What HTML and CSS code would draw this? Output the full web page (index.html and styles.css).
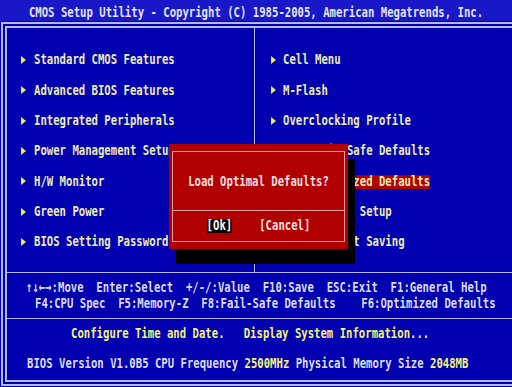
FILE: index.html
```html
<!DOCTYPE html>
<html>
<head>
<meta charset="utf-8">
<link rel="stylesheet" href="styles.css">
</head>
<body>
<div class="screen">
  <div class="title"><span class="t">CMOS Setup Utility - Copyright (C) 1985-2005, American Megatrends, Inc.</span></div>
  <div class="outer">
    <div class="inner">
      <div class="menu">
        <ul class="col left">
          <li><i class="arr"></i><span class="t">Standard CMOS Features</span></li>
          <li><i class="arr"></i><span class="t">Advanced BIOS Features</span></li>
          <li><i class="arr"></i><span class="t">Integrated Peripherals</span></li>
          <li><i class="arr"></i><span class="t">Power Management Setup</span></li>
          <li><i class="arr"></i><span class="t">H/W Monitor</span></li>
          <li><i class="arr"></i><span class="t">Green Power</span></li>
          <li><i class="arr"></i><span class="t">BIOS Setting Password</span></li>
        </ul>
        <ul class="col right">
          <li><i class="arr"></i><span class="t">Cell Menu</span></li>
          <li><i class="arr"></i><span class="t">M-Flash</span></li>
          <li><i class="arr"></i><span class="t">Overclocking Profile</span></li>
          <li><i class="arr"></i><span class="t">Load Fail-Safe Defaults</span></li>
          <li class="sel"><i class="arr"></i><span class="t">Load Optimized Defaults</span></li>
          <li><i class="arr"></i><span class="t">Save &amp; Exit Setup</span></li>
          <li><i class="arr"></i><span class="t">Exit Without Saving</span></li>
        </ul>
      </div>
      <div class="help">
        <div class="t l1">↑↓←→:Move  Enter:Select  +/-/:Value  F10:Save  ESC:Exit  F1:General Help</div>
        <div class="t l2">F4:CPU Spec  F5:Memory-Z  F8:Fail-Safe Defaults    F6:Optimized Defaults</div>
      </div>
      <div class="status"><span class="t">Configure Time and Date.   Display System Information...</span></div>
      <div class="info"><span class="t">BIOS Version V1.0B5 CPU Frequency <b>2500MHz</b> Physical Memory Size <b>2048MB</b></span></div>
    </div>
  </div>
  <div class="dialog">
    <div class="dlg-inner">
      <div class="dlg-msg"><span class="t">Load Optimal Defaults?</span></div>
      <div class="dlg-btns">
        <span class="t btn on">[Ok]</span>
        <span class="t btn">[Cancel]</span>
      </div>
    </div>
  </div>
</div>
</body>
</html>
```

FILE: styles.css
```css
* { box-sizing: border-box; }
html, body { margin: 0; padding: 0; }
body {
  width: 512px;
  height: 387px;
  overflow: hidden;
  background: #0000b0;
  font-family: "DejaVu Sans Mono", "Liberation Mono", monospace;
  font-weight: bold;
  font-size: 10.63px;
  color: #ececb4;
}
.screen {
  position: relative;
  width: 512px;
  height: 387px;
}
.t {
  display: inline-block;
  white-space: pre;
  line-height: 11px;
  transform: scaleY(1.38);
}
.title {
  height: 21px;
  background: #1818c8;
  color: #e4e4ec;
  text-align: center;
  padding-top: 7px;
  line-height: 11px;
}
.outer {
  margin: 1px 0 0 1px;
  border: 2px solid #b8b8f0;
  border-right: none;
  padding: 2px 0 2px 2px;
  height: 364px;
}
.inner {
  border: 2px solid #b8b8f0;
  border-right: none;
  height: 100%;
  display: flex;
  flex-direction: column;
}
.menu {
  height: 244px;
  display: flex;
}
.col {
  list-style: none;
  margin: 0;
  padding: 16.8px 0 0 0;
}
.col li {
  height: 30.33px;
  display: flex;
  align-items: center;
}
.left {
  width: 248px;
  padding-left: 14px;
  border-right: 1px solid #b8b8f0;
}
.right {
  flex: 1;
  padding-left: 16px;
}
.arr {
  width: 0;
  height: 0;
  border-left: 5px solid #f0f050;
  border-top: 4px solid transparent;
  border-bottom: 4px solid transparent;
  margin-right: 8px;
}
.right .arr { margin-right: 7px; }
.sel .t { background: #b00000; line-height: 9.5px; }
.help {
  border-top: 1px solid #b8b8f0;
  height: 46px;
  color: #dcdce8;
  display: flex;
  flex-direction: column;
  justify-content: center;
  gap: 4.4px;
}
.l1 { padding-left: 19px; }
.l2 { padding-left: 28px; }
.status {
  border-top: 1px solid #b8b8f0;
  height: 29px;
  color: #f4f47c;
  display: flex;
  align-items: center;
  padding-left: 64px;
}
.info {
  flex: 1;
  color: #dcdce8;
  display: flex;
  align-items: center;
  padding-left: 20px;
}
.info b { color: #f4f47c; font-weight: bold; }
.dialog {
  position: absolute;
  left: 169px;
  top: 144px;
  width: 179px;
  height: 105px;
  background: #b00000;
  box-shadow: 7px 15px 0 0 #000;
  padding: 7px 3px;
}
.dlg-inner {
  border: 1px solid #e4a0a0;
  height: 100%;
  display: flex;
  flex-direction: column;
  color: #f0e0e0;
}
.dlg-msg {
  height: 59px;
  border-bottom: 1px solid #e4a0a0;
  display: flex;
  align-items: center;
  justify-content: center;
}
.dlg-btns {
  flex: 1;
  display: flex;
  align-items: center;
  justify-content: center;
  gap: 27px;
}
.btn { line-height: 10px; }
.btn.on { background: #000; color: #fff; }
```
